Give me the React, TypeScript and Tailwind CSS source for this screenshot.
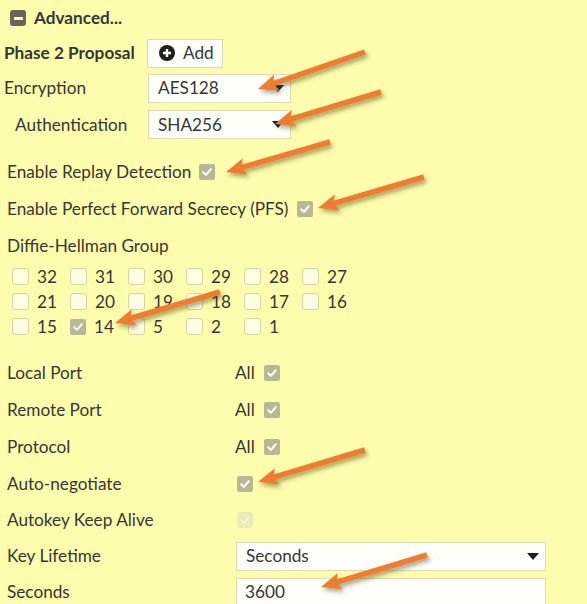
import React from 'react';

/* ===============================
    Small pieces
================================ */
function Box({ checked = false, faded = false }: { checked?: boolean; faded?: boolean }) {
  if (checked) {
    return (
      <span
        className={`flex h-[16px] w-[16px] shrink-0 items-center justify-center rounded-[2px] ${
          faded ? 'bg-[#ecebb6]' : 'bg-[#b9b797]'
        }`}
      >
        <svg width="12" height="12" viewBox="0 0 12 12">
          <path
            d="M2.2 6.3 L4.9 8.9 L9.8 3.2"
            fill="none"
            stroke={faded ? '#f6f5cf' : '#ffffff'}
            strokeWidth="2"
            strokeLinecap="round"
            strokeLinejoin="round"
          />
        </svg>
      </span>
    );
  }
  return (
    <span className="block h-[17px] w-[17px] shrink-0 rounded-[3px] border border-[#d6d3a4] bg-[#fffde2]" />
  );
}

function Caret() {
  return (
    <svg width="12" height="7" viewBox="0 0 12 7">
      <path d="M0 0 H12 L6 7 Z" fill="#1e1e1e" />
    </svg>
  );
}

function Select({ value, width }: { value: string; width: string }) {
  return (
    <div
      className={`flex h-[29px] ${width} items-center justify-between border border-[#dcd9b4] bg-[#fefefb] pl-[9px] pr-[6px]`}
    >
      <span>{value}</span>
      <Caret />
    </div>
  );
}

/* ===============================
    Arrows (overlay)
================================ */
type Arrow = { x1: number; y1: number; x2: number; y2: number };

const arrows: Arrow[] = [
  { x1: 365, y1: 52, x2: 258, y2: 89 },
  { x1: 381, y1: 92, x2: 275, y2: 124 },
  { x1: 330, y1: 142, x2: 226, y2: 172 },
  { x1: 424, y1: 177, x2: 318, y2: 208 },
  { x1: 220, y1: 292, x2: 115, y2: 323 },
  { x1: 365, y1: 450, x2: 258, y2: 482 },
  { x1: 427, y1: 555, x2: 321, y2: 587 },
];

function ArrowShape({ a }: { a: Arrow }) {
  const dx = a.x2 - a.x1;
  const dy = a.y2 - a.y1;
  const len = Math.hypot(dx, dy);
  const ux = dx / len;
  const uy = dy / len;
  const headLen = 20;
  const half = 8.5;
  const bx = a.x2 - ux * headLen;
  const by = a.y2 - uy * headLen;
  const px = -uy;
  const py = ux;
  const pts = `${a.x2},${a.y2} ${bx + px * half},${by + py * half} ${bx + ux * 4},${by + uy * 4} ${bx - px * half},${by - py * half}`;
  return (
    <g filter="url(#shadow)">
      <line x1={a.x1} y1={a.y1} x2={bx + ux * 5} y2={by + uy * 5} stroke="#ee7d31" strokeWidth="5.5" />
      <polygon points={pts} fill="#ee7d31" />
    </g>
  );
}

/* ===============================
    Page
================================ */
export default function App() {
  const dh = [
    ['32', '31', '30', '29', '28', '27'],
    ['21', '20', '19', '18', '17', '16'],
    ['15', '14', '5', '2', '1'],
  ];

  return (
    <div className="relative h-[604px] w-[587px] overflow-hidden bg-[#fefdad] font-['Lato','Noto_Sans',sans-serif] text-[17.2px] leading-none text-[#363636]">
      <div className="flex flex-col">
        {/* Advanced header */}
        <div className="flex h-[36px] items-center gap-[8px] pl-[10px]">
          <span className="flex h-[16px] w-[16px] items-center justify-center rounded-[3px] bg-[#6b655c]">
            <span className="h-[3px] w-[9px] bg-[#fefdad]" />
          </span>
          <span className="font-bold">Advanced...</span>
        </div>

        {/* Phase 2 Proposal */}
        <div className="flex h-[34px] items-center pl-[4px]">
          <span className="w-[143px] font-bold">Phase 2 Proposal</span>
          <button className="flex h-[29px] w-[76px] items-center gap-[8px] border border-[#dcd9b4] bg-[#fefefb] pl-[11px]">
            <svg width="16" height="16" viewBox="0 0 16 16">
              <circle cx="8" cy="8" r="8" fill="#1f1f1f" />
              <path d="M8 4 V12 M4 8 H12" stroke="#ffffff" strokeWidth="2.4" />
            </svg>
            <span>Add</span>
          </button>
        </div>

        {/* Encryption */}
        <div className="flex h-[36px] items-center pl-[4px]">
          <span className="w-[144px]">Encryption</span>
          <Select value="AES128" width="w-[143px]" />
        </div>

        {/* Authentication */}
        <div className="flex h-[37px] items-center pl-[15px]">
          <span className="w-[133px]">Authentication</span>
          <Select value="SHA256" width="w-[143px]" />
        </div>

        {/* Replay / PFS */}
        <div className="mt-[10px] flex h-[37px] items-center gap-[8px] pl-[7px]">
          <span>Enable Replay Detection</span>
          <Box checked />
        </div>
        <div className="flex h-[37px] items-center gap-[9px] pl-[7px]">
          <span>Enable Perfect Forward Secrecy (PFS)</span>
          <Box checked />
        </div>
        <div className="flex h-[37px] items-center pl-[7px]">
          <span>Diffie-Hellman Group</span>
        </div>

        {/* DH grid */}
        <div className="grid grid-cols-[repeat(6,58px)] pl-[12px]">
          {dh.flat().map((n) => (
            <div key={n} className="flex h-[25px] items-center gap-[8px]">
              <Box checked={n === '14'} />
              <span>{n}</span>
            </div>
          ))}
        </div>

        {/* Ports etc */}
        <div className="mt-[15px] flex flex-col pl-[7px]">
          {['Local Port', 'Remote Port', 'Protocol'].map((l) => (
            <div key={l} className="flex h-[37px] items-center">
              <span className="w-[228px]">{l}</span>
              <span className="mr-[9px]">All</span>
              <Box checked />
            </div>
          ))}
          <div className="flex h-[37px] items-center">
            <span className="w-[230px]">Auto-negotiate</span>
            <Box checked />
          </div>
          <div className="flex h-[36px] items-center">
            <span className="w-[230px]">Autokey Keep Alive</span>
            <Box checked faded />
          </div>
        </div>

        {/* Key lifetime */}
        <div className="flex h-[36px] items-center pl-[7px]">
          <span className="w-[229px]">Key Lifetime</span>
          <Select value="Seconds" width="w-[310px]" />
        </div>
        <div className="flex h-[36px] items-center pl-[7px]">
          <span className="w-[229px]">Seconds</span>
          <div className="flex h-[29px] w-[310px] items-center border border-[#dcd9b4] bg-[#fefefb] pl-[8px]">
            3600
          </div>
        </div>
      </div>

      {/* Arrows overlay */}
      <svg className="pointer-events-none absolute left-0 top-0" width="587" height="604">
        <defs>
          <filter id="shadow" x="-20%" y="-50%" width="140%" height="200%">
            <feDropShadow dx="2" dy="3" stdDeviation="2.2" floodColor="#3a3a00" floodOpacity="0.45" />
          </filter>
        </defs>
        {arrows.map((a, i) => (
          <ArrowShape key={i} a={a} />
        ))}
      </svg>
    </div>
  );
}
